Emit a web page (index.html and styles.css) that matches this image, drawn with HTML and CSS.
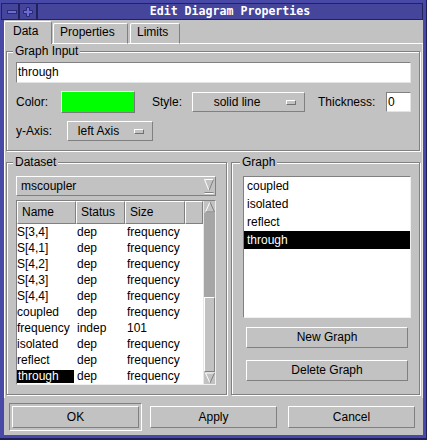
FILE: index.html
```html
<!DOCTYPE html>
<html>
<head>
<meta charset="utf-8">
<title>Edit Diagram Properties</title>
<link rel="stylesheet" href="styles.css">
</head>
<body>
<div class="window">
  <div class="titlebar">
    <div class="tb-btn">
      <svg width="16" height="15" viewBox="0 0 16 15"><rect x="5.5" y="6.5" width="9" height="3" fill="#6c6cd4" stroke="#2a2a78"/></svg>
    </div>
    <div class="tb-btn">
      <svg width="16" height="15" viewBox="0 0 16 15"><path d="M6.5 3.5h3v3h3v3h-3v3h-3v-3h-3v-3h3z" fill="#6c6cd4" stroke="#2a2a78"/></svg>
    </div>
    <div class="title">Edit Diagram Properties</div>
  </div>
  <div class="client">
    <div class="tabs">
      <div class="tab tab-sel tab-data">Data</div>
      <div class="tab tab-props">Properties</div>
      <div class="tab tab-limits">Limits</div>
    </div>
    <div class="panel">
      <div class="group group-input">
        <div class="glabel">Graph Input</div>
        <div class="field field-name">through</div>
        <div class="row row-color">
          <span class="lbl lbl-color">Color:</span>
          <span class="swatch"></span>
          <span class="lbl lbl-style">Style:</span>
          <div class="combo combo-style"><span class="combo-text">solid line</span><span class="ind"></span></div>
          <span class="lbl lbl-thick">Thickness:</span>
          <div class="field field-thick">0</div>
        </div>
        <div class="row row-axis">
          <span class="lbl lbl-axis">y-Axis:</span>
          <div class="combo combo-axis"><span class="combo-text">left Axis</span><span class="ind"></span></div>
        </div>
      </div>
      <div class="lower">
        <div class="group group-dataset">
          <div class="glabel">Dataset</div>
          <div class="dcombo">
            <span class="dcombo-text">mscoupler</span>
            <svg class="dcombo-arrow" width="10" height="15" viewBox="0 0 10 15">
              <path d="M0.5 0.5H9.5" stroke="#ffffff" fill="none"/>
              <path d="M0.5 0.5L5 11.5" stroke="#ffffff" fill="none"/>
              <path d="M9.5 0.5L5 11.5" stroke="#808080" fill="none"/>
              <path d="M0.5 13.5H9.5" stroke="#808080" fill="none"/>
              <path d="M0.5 14.5H9.5" stroke="#ffffff" fill="none"/>
            </svg>
          </div>
          <div class="listview">
            <div class="lv-main">
              <div class="lv-head">
                <div class="hc w-name">Name</div>
                <div class="hc w-status">Status</div>
                <div class="hc w-size">Size</div>
                <div class="hc w-blank"></div>
              </div>
              <div class="lv-row"><span class="cell w-name">S[3,4]</span><span class="cell w-status">dep</span><span class="cell w-size">frequency</span></div>
              <div class="lv-row"><span class="cell w-name">S[4,1]</span><span class="cell w-status">dep</span><span class="cell w-size">frequency</span></div>
              <div class="lv-row"><span class="cell w-name">S[4,2]</span><span class="cell w-status">dep</span><span class="cell w-size">frequency</span></div>
              <div class="lv-row"><span class="cell w-name">S[4,3]</span><span class="cell w-status">dep</span><span class="cell w-size">frequency</span></div>
              <div class="lv-row"><span class="cell w-name">S[4,4]</span><span class="cell w-status">dep</span><span class="cell w-size">frequency</span></div>
              <div class="lv-row"><span class="cell w-name">coupled</span><span class="cell w-status">dep</span><span class="cell w-size">frequency</span></div>
              <div class="lv-row"><span class="cell w-name">frequency</span><span class="cell w-status">indep</span><span class="cell w-size">101</span></div>
              <div class="lv-row"><span class="cell w-name">isolated</span><span class="cell w-status">dep</span><span class="cell w-size">frequency</span></div>
              <div class="lv-row"><span class="cell w-name">reflect</span><span class="cell w-status">dep</span><span class="cell w-size">frequency</span></div>
              <div class="lv-row"><span class="cell w-name"><span class="lv-sel">through</span></span><span class="cell w-status">dep</span><span class="cell w-size">frequency</span></div>
            </div>
            <div class="scrollbar">
              <div class="sb-btn">
                <svg width="12" height="12" viewBox="0 0 12 12">
                  <path d="M1.5 11L6 1" stroke="#ffffff" fill="none"/>
                  <path d="M6 1L10.5 11H1.5" stroke="#808080" fill="none"/>
                </svg>
              </div>
              <div class="sb-trough"></div>
              <div class="sb-thumb"></div>
              <div class="sb-btn">
                <svg width="12" height="12" viewBox="0 0 12 12">
                  <path d="M10.5 1H1.5L6 11" stroke="#ffffff" fill="none"/>
                  <path d="M10.5 1L6 11" stroke="#808080" fill="none"/>
                </svg>
              </div>
            </div>
          </div>
        </div>
        <div class="group group-graph">
          <div class="glabel">Graph</div>
          <div class="glist">
            <div class="gitem">coupled</div>
            <div class="gitem">isolated</div>
            <div class="gitem">reflect</div>
            <div class="gitem gitem-sel">through</div>
          </div>
          <div class="btn btn-wide btn-new">New Graph</div>
          <div class="btn btn-wide btn-del">Delete Graph</div>
        </div>
      </div>
    </div>
    <div class="buttons">
      <div class="default-frame"><div class="btn btn-dlg">OK</div></div>
      <div class="btn btn-dlg btn-apply">Apply</div>
      <div class="btn btn-dlg btn-cancel">Cancel</div>
    </div>
  </div>
</div>
</body>
</html>
```
FILE: styles.css
```css
* { box-sizing: border-box; }

body {
  margin: 0;
  background: #4848a4;
  font-family: "Liberation Sans", Arial, sans-serif;
  font-size: 12px;
  color: #000;
}

.window {
  width: 427px;
  height: 440px;
  background: #4848a6;
  padding: 3px 4px 5px 4px;
  display: flex;
  flex-direction: column;
  box-shadow: inset -1px -2px 0 #1e1e58;
}

.titlebar {
  height: 17px;
  margin-left: -3px;
  display: flex;
  background: #45459b;
  border-top: 1px solid #22225e;
  border-bottom: 1px solid #22225e;
  border-right: 1px solid #22225e;
  border-left: 1px solid #22225e;
}

.tb-btn {
  width: 18px;
  border-right: 2px solid #22225e;
  display: flex;
  align-items: center;
}

.title {
  flex: 1;
  text-align: center;
  color: #fff;
  font-family: "DejaVu Sans Mono", "Liberation Mono", monospace;
  font-weight: bold;
  font-size: 11.6px;
  line-height: 15px;
}

.client {
  flex: 1;
  background: #c2c2c2;
  display: flex;
  flex-direction: column;
}

/* Tabs */
.tabs {
  height: 24px;
  display: flex;
  align-items: flex-end;
  background: linear-gradient(to top, #fff 1px, transparent 1px);
}

.tab {
  height: 21px;
  background: #c2c2c2;
  border-top: 1px solid #fff;
  border-left: 1px solid #fff;
  border-right: 1px solid #808080;
  border-bottom: 1px solid #fff;
  border-top-left-radius: 2px;
  border-top-right-radius: 2px;
  line-height: 16px;
  white-space: nowrap;
}

.tab-sel {
  height: 23px;
  border-bottom: none;
  line-height: 18px;
}

.tab-data { width: 48px; padding-left: 8px; }
.tab-props { width: 75px; margin-left: 1px; padding-left: 6px; }
.tab-limits { width: 50px; margin-left: 2px; padding-left: 6px; }

/* Panel */
.panel {
  height: 354px;
  border-left: 1px solid #fff;
  border-right: 1px solid #e6e6e6;
  padding-left: 1px;
}

.group {
  border: 1px solid #808080;
  box-shadow: 1px 1px 0 #fff, inset 1px 1px 0 #fff;
}

.glabel {
  width: max-content;
  height: 14px;
  line-height: 14px;
  margin-top: -8px;
  margin-left: -3px;
  padding: 0 2px;
  background: #c2c2c2;
}

.group-input {
  margin-top: 7px;
  width: 414px;
  height: 100px;
  padding: 0 8px 0 9px;
}

.field {
  background: #fff;
  border: 1px solid;
  border-color: #808080 #e4e4e4 #e4e4e4 #808080;
  padding-left: 1px;
}

.field-name {
  margin-top: 4px;
  height: 21px;
  line-height: 19px;
}

.row {
  display: flex;
  align-items: center;
}

.row-color {
  margin-top: 8px;
  height: 22px;
}

.lbl { white-space: nowrap; }
.lbl-color { width: 45px; }
.lbl-style { width: 40px; margin-left: 17px; }
.lbl-thick { width: 68px; margin-left: 13px; }
.lbl-axis { width: 51px; }

.swatch {
  width: 74px;
  height: 22px;
  background: #00ff00;
  border: 1px solid;
  border-color: #ececec #7a7a7a #7a7a7a #ececec;
}

.combo {
  height: 20px;
  display: flex;
  align-items: center;
  background: #c2c2c2;
  border: 1px solid;
  border-color: #fff #808080 #808080 #fff;
}

.combo-style { width: 113px; }
.combo-axis { width: 86px; }

.combo-text {
  flex: 1;
  text-align: center;
  white-space: nowrap;
}

.ind {
  width: 10px;
  height: 5px;
  margin: 0 8px 0 5px;
  border: 1px solid;
  border-color: #fff #707070 #707070 #fff;
}

.field-thick {
  width: 25px;
  height: 20px;
  line-height: 18px;
}

.row-axis {
  margin-top: 8px;
  height: 20px;
}

/* Lower area */
.lower {
  display: flex;
  margin-top: 11px;
}

.group-dataset {
  width: 221px;
  height: 233px;
  padding: 0 10px 0 9px;
}

.dcombo {
  margin-top: 7px;
  height: 20px;
  display: flex;
  align-items: center;
  padding-left: 4px;
  border: 1px solid;
  border-color: #fff #808080 #808080 #fff;
}

.dcombo-text { flex: 1; }
.dcombo-arrow { margin-right: 1px; display: block; }

.listview {
  margin-top: 4px;
  height: 185px;
  display: flex;
  background: #fff;
  border: 1px solid;
  border-color: #808080 #f0f0f0 #f0f0f0 #808080;
}

.lv-main { width: 186px; }

.lv-head {
  display: flex;
  height: 23px;
}

.hc {
  height: 23px;
  background: #c2c2c2;
  border: 1px solid;
  border-color: #fff #808080 #808080 #fff;
  padding-left: 4px;
  line-height: 21px;
}

.w-name { width: 59px; }
.w-status { width: 49px; }
.w-size { width: 60px; }
.w-blank { width: 18px; }

.lv-row {
  display: flex;
  height: 16px;
  line-height: 16px;
}

.cell { white-space: nowrap; }
.lv-row .w-status { padding-left: 1px; }
.lv-row .w-size { padding-left: 2px; }

.lv-sel {
  display: inline-block;
  width: 57px;
  height: 13px;
  line-height: 13px;
  margin-top: 2px;
  padding-left: 1px;
  vertical-align: top;
  background: #000;
  color: #fff;
}

.scrollbar {
  width: 12px;
  display: flex;
  flex-direction: column;
  background: #a6a6a6;
  border-left: 1px solid #e8e8e8;
}

.sb-btn {
  height: 12px;
  background: #c2c2c2;
}

.sb-btn svg { display: block; }

.sb-trough { flex: 1; }

.sb-thumb {
  height: 75px;
  background: #c2c2c2;
  border: 1px solid;
  border-color: #fff #808080 #808080 #fff;
}

.group-graph {
  margin-left: 4px;
  width: 189px;
  height: 233px;
  padding: 0 8px 0 11px;
}

.glist {
  margin-top: 7px;
  height: 142px;
  background: #fff;
  border: 1px solid;
  border-color: #808080 #f0f0f0 #f0f0f0 #808080;
}

.gitem {
  height: 18px;
  line-height: 18px;
  padding-left: 3px;
}

.gitem-sel {
  background: #000;
  color: #fff;
}

.btn {
  background: #c2c2c2;
  border: 1px solid;
  border-color: #fff #808080 #808080 #fff;
  text-align: center;
  white-space: nowrap;
}

.btn-wide {
  margin: 9px 3px 0 3px;
  height: 21px;
  line-height: 19px;
}

.btn-del { margin-top: 12px; }

/* Dialog buttons */
.buttons {
  display: flex;
  align-items: flex-start;
  padding: 5px 0 0 5px;
}

.default-frame {
  border: 1px solid;
  border-color: #808080 #fff #fff #808080;
  padding: 2px;
}

.btn-dlg {
  width: 127px;
  height: 22px;
  line-height: 20px;
}

.btn-apply { margin-left: 8px; margin-top: 3px; }
.btn-cancel { margin-left: 11px; margin-top: 3px; }
```
